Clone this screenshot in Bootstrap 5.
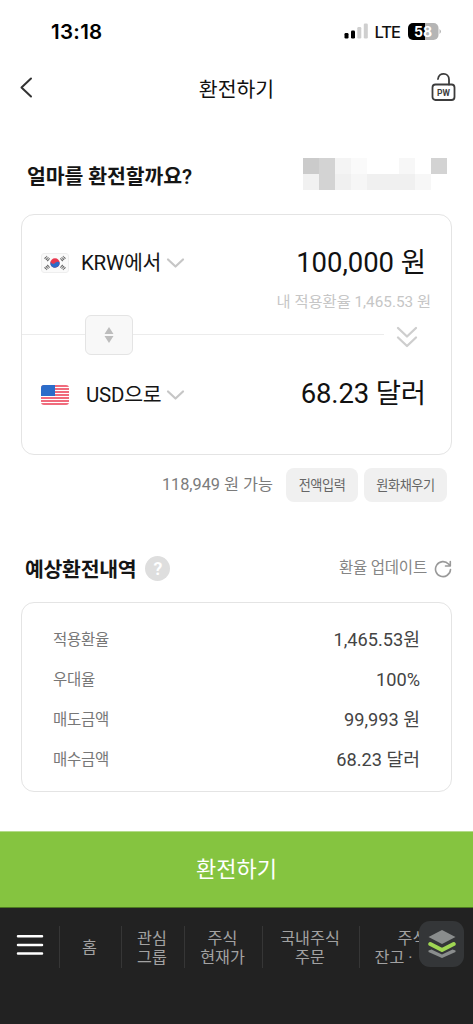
<!DOCTYPE html>
<html lang="ko">
<head>
<meta charset="utf-8">
<meta name="viewport" content="width=device-width, initial-scale=1">
<title>환전하기</title>
<link href="https://cdn.jsdelivr.net/npm/bootstrap@5.3.0/dist/css/bootstrap.min.css" rel="stylesheet">
<style>
body{font-family:Roboto,"Noto Sans CJK KR",sans-serif;color:#151515;background:#fff;white-space:nowrap;overflow:hidden;line-height:1}
.app{height:1024px}
svg{display:block;flex:none}
.statusbar{height:63px;padding:0 32px 0 51px;font-family:Inter,sans-serif}
.clock{font-size:20.5px;font-weight:600;letter-spacing:.3px;color:#000;padding-top:1px}
.lte{font-size:16.5px;font-weight:500;letter-spacing:-1px;color:#111;padding-top:1px;margin:0 8px 0 6px}
.topbar{height:51px;padding:0 17px 0 19px}
.topbar h1{font-size:20.5px;font-weight:400;color:#111;padding:3px 3px 0 0}
.ask{height:100px;padding:24px 26px 0 27px}
.ask h2{font-size:20.5px;font-weight:600;letter-spacing:-.1px;padding-top:3px}
.mosaic{display:grid;grid-template-columns:repeat(9,16px);grid-auto-rows:16px;margin-top:-4px}
.panel{border:1.5px solid #e4e4e4;border-radius:13px;margin:0 21px}
.exchange{height:242px}
.money-row{height:96px;padding:0 25px 0 19px}
.cur{font-size:20.5px;letter-spacing:-.25px}
.amount{font-size:27.5px;letter-spacing:-.05px;color:#111}
.usd{padding-top:1px;letter-spacing:-.15px}
.rate{height:20px;line-height:20px;margin-top:-19px;padding-right:20px;font-size:15.3px;color:#c6c6c6}
.rule{height:1px;background:#ececec}
.divider{height:46px}
.swap{width:48px;height:40px;border:1.5px solid #e4e4e4;border-radius:6px;background:#f8f8f8}
.avail{height:60px;padding-right:26px;font-size:16.3px;color:#7b7b7b}
.fill-btn{height:34px;border-radius:8px;background:#f0f0f0;font-size:13.2px;letter-spacing:-.45px;color:#666;padding:1px 0 0}
.estimate{height:87px;padding:20px 21px 0 25px}
.estimate h2{font-size:20.5px;font-weight:700;letter-spacing:-.3px;padding-top:2px}
.help{width:25px;height:25px;border-radius:50%;background:#dedede;color:#fff;font-size:18px;font-weight:600}
.update{font-size:15.5px;letter-spacing:-.2px;color:#858585}
.details{height:190px;padding:17px 31px 0 31px}
.detail-row{height:40px}
.detail-row dt{font-size:15.5px;font-weight:400;letter-spacing:-.3px;color:#777}
.detail-row dd{font-size:18.2px;color:#444}
.cta{height:77px;margin-top:39px;background:#85c440;border:0;border-top:1px solid #b4db8b;border-bottom:1px solid #4d7a20;border-radius:0;color:#fff;font-size:22px}
.tabs{height:116px;background:#222;color:#a2a2a2;font-size:16.2px;line-height:19.5px;padding-top:18px}
.tabs>div{height:42px;display:flex;align-items:center;justify-content:center;text-align:center;flex:none;padding-top:2px}
.tabs>div+div{border-left:1px solid #363636;padding-right:2px}
.tabs>.menu{padding:0 0 4px}
.layers{width:45px;height:46px;border-radius:11px;background:#343638;right:9px;top:13px}
</style>
</head>
<body>
<main class="app d-flex flex-column position-relative">
  <div class="statusbar d-flex align-items-center justify-content-between">
    <span class="clock">13:18</span>
    <div class="d-flex align-items-center">
      <svg width="25" height="16" viewBox="0 0 25 16"><rect x=".5" y="10" width="4" height="5.500" rx="1.200"/><rect x="7" y="7.500" width="4" height="8" rx="1.200"/><rect x="13.300" y="4" width="4" height="11.500" rx="1.200" fill="#cfcfcf"/><rect x="19.800" y=".5" width="4" height="15" rx="1.200" fill="#cfcfcf"/></svg>
      <span class="lte">LTE</span>
      <svg width="33" height="17" viewBox="0 0 33 17"><path d="M5 0H17V17H5a5 5 0 0 1-5-5V5a5 5 0 0 1 5-5"/><path d="M17 0h8.500a5 5 0 0 1 5 5v7a5 5 0 0 1-5 5H17z" fill="#b5b5b5"/><path d="M31.500 6v5q3-2.500 0-5" fill="#b5b5b5"/><text x="15" y="13.500" text-anchor="middle" font-size="14" font-weight="700" fill="#fff">58</text></svg>
    </div>
  </div>
  <header class="topbar d-flex align-items-center justify-content-between">
    <svg width="26" height="24" viewBox="0 0 26 24" fill="none" stroke="#333" stroke-width="2" stroke-linecap="round" stroke-linejoin="round"><path d="M12 2.500 2.500 11.500 12 20.500"/></svg>
    <h1 class="m-0">환전하기</h1>
    <svg style="margin-top:-3px" width="25" height="30" viewBox="0 0 25 30" fill="none" stroke="#3c3c3c" stroke-width="1.800" stroke-linecap="round"><rect x="1.500" y="12.500" width="22" height="15.500" rx="3"/><path d="M7 7C7.800 0 18 0 18 7.500v5"/><text x="12.500" y="23.500" text-anchor="middle" font-size="8.500" font-weight="700" fill="#3c3c3c" stroke="none">PW</text></svg>
  </header>
  <section class="ask d-flex align-items-center justify-content-between">
    <h2 class="m-0">얼마를 환전할까요?</h2>
    <div class="mosaic" aria-hidden="true">
      <i style="background:#cbcbcb"></i><i style="background:#d3d3d3"></i><i style="background:#f4f4f4"></i><i style="background:#fafafa"></i><i></i><i></i><i style="background:#f7f7f7"></i><i></i><i style="background:#d3d3d3"></i>
      <i style="background:#f1f1f1"></i><i style="background:#d3d3d3"></i><i style="background:#f0f0f0"></i><i style="background:#f6f6f6"></i><i style="background:#f0f0f0"></i><i style="background:#f0f0f0"></i><i style="background:#f0f0f0"></i><i style="background:#f7f7f7"></i><i></i>
    </div>
  </section>
  <section class="panel exchange">
    <div class="money-row d-flex align-items-center justify-content-between">
      <div class="d-flex align-items-center">
        <svg width="28" height="20" viewBox="0 0 28 20"><rect x=".5" y=".5" width="27" height="19" rx="2.500" fill="#fafafa" stroke="#eee"/><circle cx="14" cy="10" r="4.700" fill="#e8384f"/><path d="M9.500 8.600C10.500 11.500 13 11.200 14 10S17.500 8 18.600 9.500A4.700 4.700 0 0 1 9.500 11.500Z" fill="#2b6cc9"/><g stroke="#666" stroke-width="1.200" stroke-dasharray="2.300 .4"><path d="M3.500 5.700 6 3.200M4.900 6.900 7.400 4.400M6.200 8 8.700 5.500M3.500 14.300 6 16.800M4.900 13.100 7.400 15.600M6.200 12 8.700 14.500M24.500 5.700 22 3.200M23.100 6.900 20.600 4.400M21.800 8 19.300 5.500M24.500 14.300 22 16.800M23.100 13.100 20.600 15.600M21.800 12 19.300 14.500"/></g></svg>
        <span class="cur" style="margin-left:12px">KRW에서</span>
        <svg class="ms-1" width="20" height="14" viewBox="0 0 20 14" fill="none" stroke="#c6c6c6" stroke-width="2.200" stroke-linecap="round" stroke-linejoin="round"><path d="M3 3.500 10.500 10.500 18 3.500"/></svg>
      </div>
      <span class="amount">100,000 원</span>
    </div>
    <div class="rate text-end">내 적용환율 1,465.53 원</div>
    <div class="divider d-flex align-items-center">
      <div class="rule" style="width:63px"></div>
      <div class="swap d-flex align-items-center justify-content-center"><svg width="10" height="16" viewBox="0 0 10 16" fill="#bdbdbd"><path d="M5 0 9.500 7H.5zM5 16 .5 9h9z"/></svg></div>
      <div class="rule flex-fill"></div>
      <svg style="margin:4px 33px 0 12px" width="22" height="22" viewBox="0 0 22 22" fill="none" stroke="#cecece" stroke-width="2.300" stroke-linecap="round" stroke-linejoin="round"><path d="M2 2 11 10.500 20 2M2 11.500 11 20 20 11.500"/></svg>
    </div>
    <div class="money-row d-flex align-items-center justify-content-between" style="height:71px">
      <div class="d-flex align-items-center pt-1">
        <svg width="28" height="20" viewBox="0 0 28 20"><clipPath id="us"><rect width="28" height="20" rx="3"/></clipPath><g clip-path="url(#us)"><path fill="#fff" d="M0 0h28v20H0z"/><path stroke="#eb3b52" stroke-width="1.700" d="M0 1h28M0 4h28M0 7h28M0 10h28M0 13h28M0 16h28M0 19h28"/><path fill="#2b6cc9" d="M0 0h14v11H0z"/></g></svg>
        <span class="cur" style="margin-left:17px">USD으로</span>
        <svg class="ms-1" width="20" height="14" viewBox="0 0 20 14" fill="none" stroke="#c6c6c6" stroke-width="2.200" stroke-linecap="round" stroke-linejoin="round"><path d="M3 3.500 10.500 10.500 18 3.500"/></svg>
      </div>
      <span class="amount usd">68.23 달러</span>
    </div>
  </section>
  <section class="avail d-flex align-items-center justify-content-end">
    <span style="margin-right:13px">118,949 원 가능</span>
    <button class="btn fill-btn" style="width:72px;margin-right:6px">전액입력</button>
    <button class="btn fill-btn" style="width:83px">원화채우기</button>
  </section>
  <section class="estimate d-flex align-items-center justify-content-between">
    <div class="d-flex align-items-center"><h2 class="m-0">예상환전내역</h2><span class="help d-flex align-items-center justify-content-center" style="margin-left:9px">?</span></div>
    <div class="update d-flex align-items-center"><span>환율 업데이트</span><svg style="margin-left:7px" width="18" height="18" viewBox="0 0 18 18" fill="none" stroke="#999" stroke-width="1.600" stroke-linecap="round" stroke-linejoin="round"><path d="M16.500 9.500A7.500 7.500 0 1 1 14.500 4L16 5.500M16.300 1.500V6H11.500"/></svg></div>
  </section>
  <dl class="panel details mb-0">
    <div class="detail-row d-flex align-items-center justify-content-between"><dt>적용환율</dt><dd class="m-0">1,465.53원</dd></div>
    <div class="detail-row d-flex align-items-center justify-content-between"><dt>우대율</dt><dd class="m-0">100%</dd></div>
    <div class="detail-row d-flex align-items-center justify-content-between"><dt>매도금액</dt><dd class="m-0">99,993 원</dd></div>
    <div class="detail-row d-flex align-items-center justify-content-between"><dt>매수금액</dt><dd class="m-0">68.23 달러</dd></div>
  </dl>
  <button class="btn cta w-100 flex-shrink-0">환전하기</button>
  <nav class="tabs d-flex position-relative">
    <div class="menu" style="width:59px"><svg width="28" height="22" viewBox="0 0 28 22" stroke="#fff" stroke-width="2.500" stroke-linecap="round"><path d="M2 2.200h24M2 11h24M2 19.600h24"/></svg></div>
    <div style="width:62px">홈</div>
    <div style="width:63px">관심<br>그룹</div>
    <div style="width:78px">주식<br>현재가</div>
    <div style="width:97px">국내주식<br>주문</div>
    <div style="width:108px">주식<br>잔고 ·&nbsp; 손익</div>
    <span class="layers position-absolute d-flex align-items-center justify-content-center"><svg width="28" height="28" viewBox="0 0 28 28"><path d="M14 0 27.500 7 14 14 .5 7z" fill="#8a8d8d"/><path d="M2.300 14 14 20 25.700 14" fill="none" stroke="#a0d653" stroke-width="4" stroke-linecap="round" stroke-linejoin="round"/><path d="M.5 20.500 3.500 19.500 14 24.500 24.500 19.500 27.500 20.500V22L14 28 .5 22z" fill="#8a8d8d"/></svg></span>
  </nav>
</main>
<script src="https://cdn.jsdelivr.net/npm/bootstrap@5.3.0/dist/js/bootstrap.bundle.min.js"></script>
</body>
</html>
